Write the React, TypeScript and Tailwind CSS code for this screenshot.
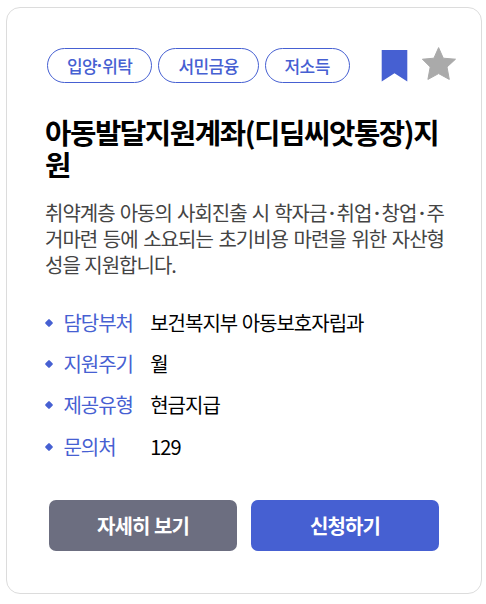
const tags = ["입양·위탁", "서민금융", "저소득"];

const details = [
  { label: "담당부처", value: "보건복지부 아동보호자립과" },
  { label: "지원주기", value: "월" },
  { label: "제공유형", value: "현금지급" },
  { label: "문의처", value: "129" },
];

function Tag({ text }: { text: string }) {
  const [first, second] = text.split("·");
  return (
    <li className="h-[35px] flex items-center rounded-full border border-[#4660d2] px-[19px] text-[17px] font-medium tracking-[-0.6px] text-[#4660d2] whitespace-nowrap">
      {first}
      {second && <span className="tracking-[0.4px] font-['Noto_Sans',sans-serif] font-bold">·</span>}
      {second}
    </li>
  );
}

export default function App() {
  return (
    <main className="w-[486px] h-[604px] bg-white pt-[7px] pl-[6px] font-['Noto_Sans_CJK_KR',sans-serif]">
      <article className="w-[476px] h-[587px] rounded-[14px] border border-[#dcdcdc] pt-[40px] pl-[38px]">
        <div className="flex h-[36px]">
          <ul className="w-[305px] pl-[2px] flex gap-[6px]">
            {tags.map((tag) => (
              <Tag key={tag} text={tag} />
            ))}
          </ul>
          <svg className="ml-[31px] mt-[1px] w-[28px] h-[34px] shrink-0" viewBox="0 0 28 34">
            <path d="M0.7 1H26.3V32.6L13.5 24.3L0.7 32.6Z" fill="#4660d2" />
          </svg>
          <svg className="ml-[12px] -mt-[2px] w-[36px] h-[36px] shrink-0" viewBox="0 0 36 36">
            <path
              d="M17.6 1.6L22.3 12.2L34.5 13.2L26 21L28.3 33.4L17.6 27.6L6.9 33.4L9.2 21L1.4 13.2L12.9 12.2Z"
              fill="#aaaaaa"
              stroke="#aaaaaa"
              strokeLinejoin="round"
            />
          </svg>
        </div>

        <h2 className="mt-[32px] w-[400px] text-[28.7px] leading-[32px] font-bold tracking-[-0.05em] text-black break-all">
          아동발달지원계좌(디딤씨앗통장)지원
        </h2>
        <p className="mt-[20px] w-[399px] text-[20px] leading-[26px] tracking-[-1px] [word-spacing:1px] text-[#444] text-justify break-all">
          취약계층 아동의 사회진출 시 학자금･취업･창업･주거마련 등에 소요되는 초기비용 마련을 위한 자산형성을 지원합니다.
        </p>

        <dl className="mt-[24px]">
          {details.map(({ label, value }) => (
            <div key={label} className="flex items-center h-[41.4px] text-[20px] tracking-[-1px] [word-spacing:1px]">
              <span className="w-[6px] h-[6px] ml-px rotate-45 rounded-[1px] bg-[#4660d2]" />
              <dt className="ml-[11.4px] w-[86.8px] text-[#4660d2]">{label}</dt>
              <dd className="text-black">{value}</dd>
            </div>
          ))}
        </dl>

        <div className="mt-[32.6px] ml-[4px] flex gap-[14px] text-[20px] font-bold tracking-[-0.9px] [word-spacing:1px] text-white">
          <button className="w-[188px] h-[51px] rounded-[7px] bg-[#6c6e80] [word-spacing:1px]">자세히 보기</button>
          <button className="w-[188px] h-[51px] rounded-[7px] bg-[#4660d2]">신청하기</button>
        </div>
      </article>
    </main>
  );
}
